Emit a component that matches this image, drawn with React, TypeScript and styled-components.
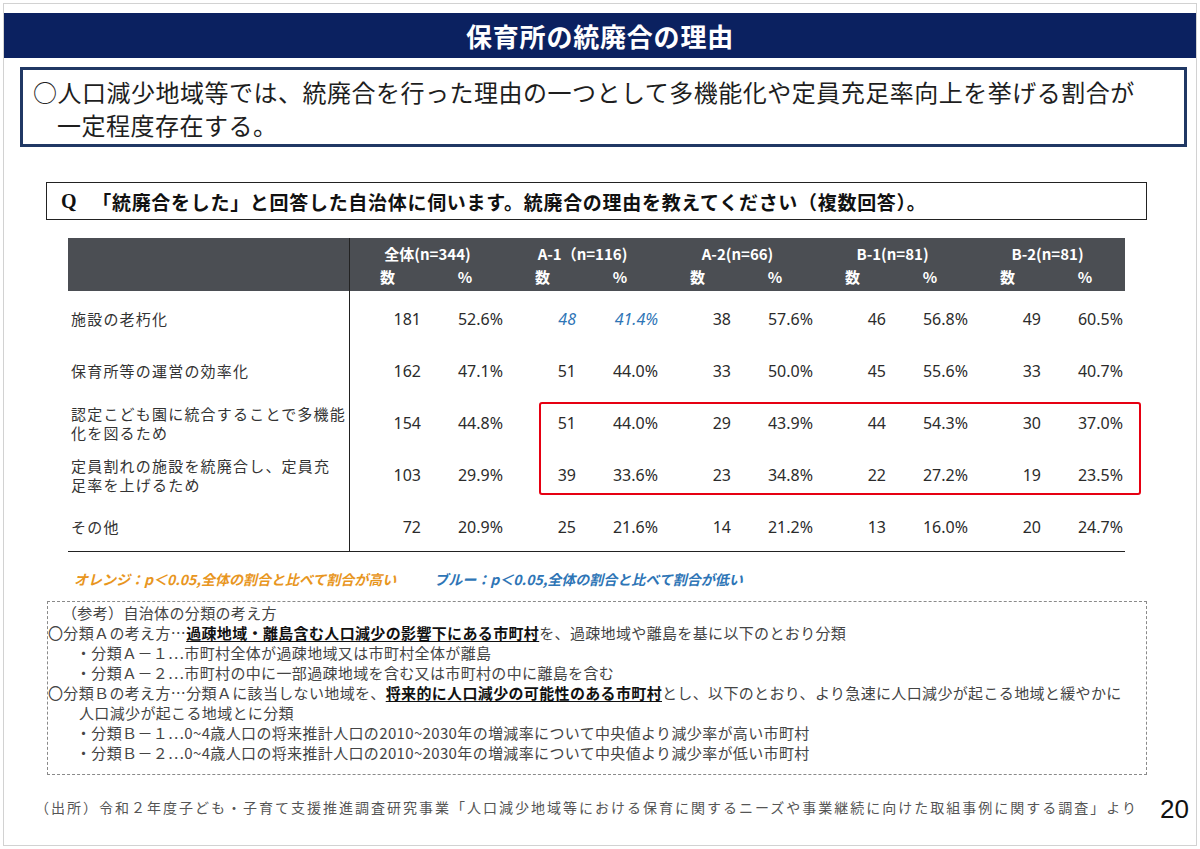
import React from 'react'
import styled, { createGlobalStyle } from 'styled-components'

const GlobalStyle = createGlobalStyle`
  html, body {
    margin: 0;
    padding: 0;
    background: #ffffff;
  }
  body {
    font-family: "Noto Sans CJK JP", "Noto Sans", sans-serif;
    color: #222;
  }
`

const Slide = styled.div`
  margin: 3px;
  width: 1194px;
  height: 843px;
  box-sizing: border-box;
  border: 1px solid #d2d2d2;
  display: flex;
  flex-direction: column;
`

const TitleBar = styled.div`
  margin-top: 9px;
  height: 45px;
  background: #0b2160;
  color: #ffffff;
  display: flex;
  align-items: center;
  justify-content: center;
  font-size: 26px;
  font-weight: 700;
  letter-spacing: 0.8px;
`

const SummaryBox = styled.div`
  margin: 9px 9px 0 16px;
  height: 80px;
  box-sizing: border-box;
  border: 3px solid #203864;
  padding: 5px 10px 0 10px;
  font-size: 24px;
  line-height: 33px;
  letter-spacing: 0.5px;
  color: #1e1e1e;
`

const Indented = styled.span`
  display: inline-block;
  padding-left: 1em;
`

const QuestionBox = styled.div`
  margin: 35px 0 0 42px;
  width: 1101px;
  height: 38px;
  box-sizing: border-box;
  border: 1.5px solid #222;
  display: flex;
  align-items: center;
  padding-left: 14px;
  font-size: 19px;
  font-weight: 700;
  letter-spacing: 0.7px;
  color: #111;
`

const QMark = styled.span`
  font-family: "Liberation Serif", "Noto Sans CJK JP", serif;
  font-size: 20px;
  margin-right: 15px;
`

const TableWrap = styled.div`
  position: relative;
  margin: 18px 0 0 64px;
  width: 1057px;
`

const Grid = styled.div`
  display: grid;
  grid-template-columns: 282px repeat(5, 75px 80px);
  grid-template-rows: 27px 26px repeat(5, 52px);
  border-bottom: 1.5px solid #222;
  font-family: "Noto Sans", "Noto Sans CJK JP", sans-serif;
  font-size: 16px;
  color: #2b2b2b;
`

const HeadCorner = styled.div`
  grid-row: 1 / span 2;
  background: #4b4e53;
  border-right: 1.5px solid #222;
`

const HeadCell = styled.div<{ $span?: number; $top?: boolean }>`
  grid-column: span ${(p) => p.$span ?? 1};
  background: #4b4e53;
  color: #ffffff;
  font-weight: 700;
  font-size: 15px;
  display: flex;
  justify-content: center;
  align-items: ${(p) => (p.$top ? 'flex-end' : 'center')};
  padding-bottom: ${(p) => (p.$top ? '1px' : '3px')};
  font-family: "Noto Sans CJK JP", "Noto Sans", sans-serif;
`

const LabelCell = styled.div`
  border-right: 1.5px solid #222;
  display: flex;
  align-items: center;
  padding: 3px 0 0 3px;
  font-family: "Noto Sans CJK JP", sans-serif;
  font-size: 15px;
  letter-spacing: 1.2px;
  line-height: 19px;
  color: #333;
`

const NumCell = styled.div<{ $pct?: boolean; $low?: boolean }>`
  display: flex;
  align-items: center;
  justify-content: flex-end;
  padding: 4px ${(p) => (p.$pct ? '2px' : '4px')} 0 0;
  color: ${(p) => (p.$low ? '#2e75b6' : '#2b2b2b')};
  font-style: ${(p) => (p.$low ? 'italic' : 'normal')};
`

const Highlight = styled.div`
  position: absolute;
  left: 471px;
  top: 164px;
  width: 602px;
  height: 93px;
  box-sizing: border-box;
  border: 2px solid #e60012;
  border-radius: 3px;
`

const Legend = styled.div`
  margin: 17px 0 0 70px;
  display: flex;
  gap: 38px;
  font-size: 14px;
  font-weight: 700;
  font-style: italic;
`

const LegendItem = styled.span<{ $color: string }>`
  color: ${(p) => p.$color};
`

const NoteBox = styled.div`
  margin: 12px 0 0 43px;
  width: 1100px;
  height: 174px;
  box-sizing: border-box;
  border: 1px dashed #8a8a8a;
  padding-top: 1px;
  font-size: 15px;
  line-height: 20px;
  letter-spacing: 0.35px;
  color: #444;
`

const NoteLine = styled.div<{ $indent?: number }>`
  padding-left: ${(p) => p.$indent ?? 0}px;
  white-space: nowrap;
`

const Strong = styled.span`
  font-weight: 700;
  color: #111;
  text-decoration: underline;
  text-underline-offset: 2px;
`

const Footer = styled.div`
  margin: 14px 0 0 31px;
  display: flex;
  align-items: center;
`

const Source = styled.span`
  font-size: 14px;
  letter-spacing: 2px;
  color: #555;
`

const PageNo = styled.span`
  margin-left: 22px;
  margin-top: 5px;
  font-family: "Liberation Sans", Arial, sans-serif;
  font-size: 26px;
  color: #111;
`

const GROUPS = ['全体(n=344)', 'A-1（n=116)', 'A-2(n=66)', 'B-1(n=81)', 'B-2(n=81)']

type Row = {
  label: React.ReactNode
  values: string[]
  low?: number[]
}

const ROWS: Row[] = [
  {
    label: '施設の老朽化',
    values: ['181', '52.6%', '48', '41.4%', '38', '57.6%', '46', '56.8%', '49', '60.5%'],
    low: [2, 3],
  },
  {
    label: '保育所等の運営の効率化',
    values: ['162', '47.1%', '51', '44.0%', '33', '50.0%', '45', '55.6%', '33', '40.7%'],
  },
  {
    label: (
      <>
        認定こども園に統合することで多機能
        <br />
        化を図るため
      </>
    ),
    values: ['154', '44.8%', '51', '44.0%', '29', '43.9%', '44', '54.3%', '30', '37.0%'],
  },
  {
    label: (
      <>
        定員割れの施設を統廃合し、定員充
        <br />
        足率を上げるため
      </>
    ),
    values: ['103', '29.9%', '39', '33.6%', '23', '34.8%', '22', '27.2%', '19', '23.5%'],
  },
  {
    label: 'その他',
    values: ['72', '20.9%', '25', '21.6%', '14', '21.2%', '13', '16.0%', '20', '24.7%'],
  },
]

const App: React.FC = () => {
  return (
    <>
      <GlobalStyle />
      <Slide>
        <TitleBar>保育所の統廃合の理由</TitleBar>

        <SummaryBox>
          ○人口減少地域等では、統廃合を行った理由の一つとして多機能化や定員充足率向上を挙げる割合が
          <br />
          <Indented>一定程度存在する。</Indented>
        </SummaryBox>

        <QuestionBox>
          <QMark>Q</QMark>
          「統廃合をした」と回答した自治体に伺います。統廃合の理由を教えてください（複数回答）。
        </QuestionBox>

        <TableWrap>
          <Grid>
            <HeadCorner />
            {GROUPS.map((g) => (
              <HeadCell key={g} $span={2} $top>
                {g}
              </HeadCell>
            ))}
            {GROUPS.map((g) => (
              <React.Fragment key={g + '-sub'}>
                <HeadCell>数</HeadCell>
                <HeadCell>%</HeadCell>
              </React.Fragment>
            ))}

            {ROWS.map((row, r) => (
              <React.Fragment key={r}>
                <LabelCell>{row.label}</LabelCell>
                {row.values.map((v, i) => (
                  <NumCell key={i} $pct={i % 2 === 1} $low={row.low?.includes(i)}>
                    {v}
                  </NumCell>
                ))}
              </React.Fragment>
            ))}
          </Grid>
          <Highlight />
        </TableWrap>

        <Legend>
          <LegendItem $color="#e8961e">オレンジ：p＜0.05,全体の割合と比べて割合が高い</LegendItem>
          <LegendItem $color="#2e75b6">ブルー：p＜0.05,全体の割合と比べて割合が低い</LegendItem>
        </Legend>

        <NoteBox>
          <NoteLine $indent={14}>（参考）自治体の分類の考え方</NoteLine>
          <NoteLine>
            〇分類Ａの考え方…<Strong>過疎地域・離島含む人口減少の影響下にある市町村</Strong>
            を、過疎地域や離島を基に以下のとおり分類
          </NoteLine>
          <NoteLine $indent={28}>・分類Ａ－１…市町村全体が過疎地域又は市町村全体が離島</NoteLine>
          <NoteLine $indent={28}>・分類Ａ－２…市町村の中に一部過疎地域を含む又は市町村の中に離島を含む</NoteLine>
          <NoteLine>
            〇分類Ｂの考え方…分類Ａに該当しない地域を、<Strong>将来的に人口減少の可能性のある市町村</Strong>
            とし、以下のとおり、より急速に人口減少が起こる地域と緩やかに
          </NoteLine>
          <NoteLine $indent={31}>人口減少が起こる地域とに分類</NoteLine>
          <NoteLine $indent={28}>
            ・分類Ｂ－１…0~4歳人口の将来推計人口の2010~2030年の増減率について中央値より減少率が高い市町村
          </NoteLine>
          <NoteLine $indent={28}>
            ・分類Ｂ－２…0~4歳人口の将来推計人口の2010~2030年の増減率について中央値より減少率が低い市町村
          </NoteLine>
        </NoteBox>

        <Footer>
          <Source>
            （出所）令和２年度子ども・子育て支援推進調査研究事業「人口減少地域等における保育に関するニーズや事業継続に向けた取組事例に関する調査」より
          </Source>
          <PageNo>20</PageNo>
        </Footer>
      </Slide>
    </>
  )
}

export default App
